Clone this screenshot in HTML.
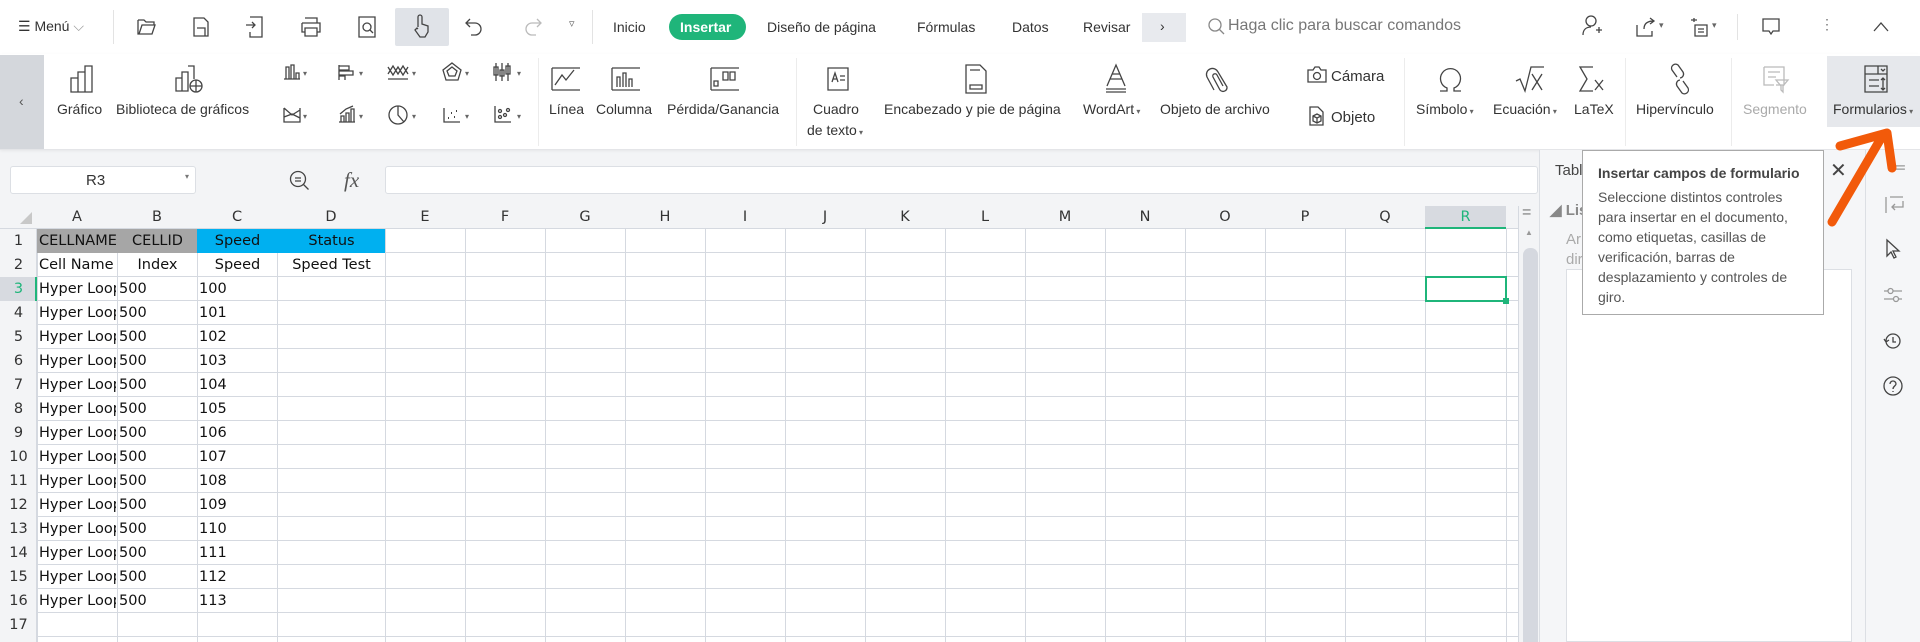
<!DOCTYPE html>
<html><head><meta charset="utf-8"><style>
*{box-sizing:border-box;margin:0;padding:0}
body{width:1920px;height:642px;overflow:hidden;background:#f3f4f6;font-family:"Liberation Sans",sans-serif;color:#333;position:relative}
.a{position:absolute}
.t{position:absolute;font-size:14px;color:#333;white-space:nowrap}
svg{position:absolute;overflow:visible}
svg *{fill:none;stroke:#444;stroke-width:1.3}
.g{position:absolute;background:#fff}
.cell{position:absolute;font-size:14.5px;font-family:"DejaVu Sans",sans-serif;color:#111;white-space:nowrap;overflow:hidden;height:24px;line-height:24px}
.dd{position:absolute;font-size:8px;color:#666;line-height:43px;top:52px}
</style></head><body>
<!-- top bar -->
<div class="a" style="left:0;top:0;width:1920px;height:54px;background:#fff"></div>
<div class="t" style="left:18px;top:18px;font-size:14px">☰ Menú <span style="color:#999">⌵</span></div>
<div class="a" style="left:113px;top:10px;width:1px;height:34px;background:#e3e3e3"></div>
<svg style="left:137px;top:18px" width="20" height="18"><path d="M1 2h6l2 2h8v3M1 2v14h14l3-9H5L2 16"/></svg>
<svg style="left:193px;top:17px" width="16" height="20"><path d="M1 1h10l4 4v14H1zM4 11h8v8"/></svg>
<svg style="left:245px;top:16px" width="18" height="22"><path d="M5 1h12v20H5v-5M1 9h9M7 6l3 3-3 3"/></svg>
<svg style="left:301px;top:17px" width="20" height="20"><path d="M4 1h12v5M1 6h18v9h-3M4 15H1V6M4 11h12v8H4z"/></svg>
<svg style="left:358px;top:16px" width="18" height="22"><path d="M1 1h16v20H1z"/><circle cx="9" cy="11" r="4"/><path d="M12 14l3 3"/></svg>
<div class="a" style="left:395px;top:8px;width:54px;height:38px;background:#e0e3e8;border-radius:2px"></div>
<svg style="left:413px;top:14px" width="18" height="24"><path d="M5 13V3a2 2 0 014 0v7l6 2v6l-3 5H7L2 16l2-2 1 1"/></svg>
<svg style="left:465px;top:18px" width="18" height="18"><path d="M5 1L1 5l4 4M1 5h9a6 6 0 010 12H6"/></svg>
<svg style="left:524px;top:18px" width="18" height="18"><path style="stroke:#bbb" d="M13 1l4 4-4 4M17 5H8a6 6 0 000 12h4"/></svg>
<div class="t" style="left:569px;top:17px;color:#666;font-size:11px">▿</div>
<div class="a" style="left:592px;top:10px;width:1px;height:34px;background:#e3e3e3"></div>
<div class="t" style="left:613px;top:19px">Inicio</div>
<div class="a" style="left:669px;top:14px;width:77px;height:26px;background:#1fb57a;border-radius:13px"></div>
<div class="t" style="left:680px;top:19px;color:#fff;font-weight:bold">Insertar</div>
<div class="t" style="left:767px;top:19px">Diseño de página</div>
<div class="t" style="left:917px;top:19px">Fórmulas</div>
<div class="t" style="left:1012px;top:19px">Datos</div>
<div class="t" style="left:1083px;top:19px">Revisar</div>
<div class="a" style="left:1142px;top:13px;width:44px;height:29px;background:#e8eaee"></div>
<div class="t" style="left:1160px;top:18px">›</div>
<svg style="left:1208px;top:18px" width="18" height="18"><circle cx="7" cy="7" r="6" style="stroke:#888"/><path d="M11 11l5 5" style="stroke:#888"/></svg>
<div class="t" style="left:1228px;top:17px;color:#777;font-size:16px">Haga clic para buscar comandos</div>
<svg style="left:1582px;top:15px" width="20" height="22"><circle cx="9" cy="6" r="5"/><path d="M1 20c0-6 4-8 8-8M14 15h6M17 12v6"/></svg>
<svg style="left:1636px;top:17px" width="20" height="20"><path d="M1 8v11h15v-5M8 12c0-6 4-8 10-8M14 1l4 3-4 3"/></svg>
<div class="t" style="left:1659px;top:20px;font-size:9px;color:#666">▾</div>
<svg style="left:1690px;top:17px" width="20" height="20"><path d="M4 1v4M1 3h6M5 8h12v11H5zM8 12h6M8 15h6"/></svg>
<div class="t" style="left:1712px;top:20px;font-size:9px;color:#666">▾</div>
<div class="a" style="left:1737px;top:14px;width:1px;height:26px;background:#e3e3e3"></div>
<svg style="left:1762px;top:18px" width="18" height="18"><path d="M1 1h16v12h-6l-2 3-2-3H1z"/></svg>
<div class="t" style="left:1820px;top:16px;color:#777">⋮</div>
<svg style="left:1873px;top:22px" width="16" height="10"><path d="M1 9l7-8 7 8"/></svg>
<!-- ribbon -->
<div class="a" style="left:0;top:54px;width:1920px;height:96px;background:#fff;border-bottom:1px solid #e4e5e8;box-shadow:0 1px 3px rgba(0,0,0,.06)"></div>
<div class="a" style="left:0;top:55px;width:44px;height:94px;background:#d4d7dc"></div>
<div class="t" style="left:19px;top:93px;color:#555">‹</div>
<svg style="left:70px;top:65px" width="24" height="28"><path d="M1 13h7v14H1zM8 7h7v20H8zM15 1h7v26h-7z"/></svg>
<div class="t" style="left:57px;top:101px">Gráfico</div>
<svg style="left:175px;top:65px" width="30" height="30"><path d="M1 13h6v13H1zM7 7h6v19H7zM13 1h6v13"/><circle cx="21" cy="21" r="6"/><path d="M15 21h12M21 15v12"/></svg>
<div class="t" style="left:116px;top:101px">Biblioteca de gráficos</div>
<svg style="left:283px;top:64px" width="18" height="16"><path d="M1 15h16M3 15V3h3v12M8 15V1h3v14M13 15V9h3v6"/></svg>
<svg style="left:338px;top:64px" width="18" height="16"><path d="M1 1v15M1 2h10v4H1M1 7h14v4H1M1 12h6v4"/></svg>
<svg style="left:387px;top:64px" width="22" height="16"><path d="M1 15h20M1 10l5-8 5 8 5-8 5 8M1 3l5 8 5-8 5 8 5-8"/></svg>
<svg style="left:442px;top:62px" width="20" height="20"><path d="M10 1l9 7-3 10H4L1 8zM10 5l5 4-2 5H7L5 9z"/></svg>
<svg style="left:493px;top:62px" width="22" height="20"><path d="M3 1v18M9 1v18M15 1v18M1 5h4v8H1zM7 8h4v6H7zM13 4h4v8h-4z"/></svg>
<svg style="left:283px;top:107px" width="18" height="16"><path d="M1 1v14h16V1M1 1l8 7 8-5M1 10l8-3 8 4"/></svg>
<svg style="left:338px;top:105px" width="18" height="18"><path d="M1 17h16M3 17v-6h3v6M8 17V8h3v9M13 17V4h3v13M2 9l6-5 7-3"/></svg>
<svg style="left:388px;top:105px" width="20" height="20"><circle cx="10" cy="10" r="9"/><path d="M10 1v9l6 7"/></svg>
<svg style="left:443px;top:107px" width="18" height="16"><path d="M1 1v14h16"/><path d="M5 11h1M8 6h1M11 10h1M13 4h1" style="stroke-width:2"/></svg>
<svg style="left:494px;top:105px" width="18" height="18"><path d="M1 1v16h16"/><circle cx="6" cy="12" r="1.5"/><circle cx="6" cy="6" r="1.5"/><circle cx="11" cy="10" r="1.5"/><circle cx="14" cy="5" r="1.5"/></svg>
<div class="dd" style="left:303px">▾<br>▾</div>
<div class="dd" style="left:359px">▾<br>▾</div>
<div class="dd" style="left:412px">▾<br>▾</div>
<div class="dd" style="left:465px">▾<br>▾</div>
<div class="dd" style="left:517px">▾<br>▾</div>
<div class="a" style="left:538px;top:58px;width:1px;height:88px;background:#ececec"></div>
<svg style="left:551px;top:67px" width="30" height="24"><path d="M1 1h28M1 23h28M1 1v22M4 18l7-10 4 5 8-10"/></svg>
<div class="t" style="left:549px;top:101px">Línea</div>
<svg style="left:611px;top:67px" width="30" height="24"><path d="M1 1h28M1 23h28M1 1v22M6 20V10h3v10M12 20V6h3v14M18 20v-8h3v8"/></svg>
<div class="t" style="left:596px;top:101px">Columna</div>
<svg style="left:710px;top:67px" width="30" height="24"><path d="M1 1v22M1 23h28M1 1h28M4 14h4v5H4zM13 5h5v8h-5zM20 5h5v8h-5z"/></svg>
<div class="t" style="left:667px;top:101px">Pérdida/Ganancia</div>
<div class="a" style="left:796px;top:58px;width:1px;height:88px;background:#ececec"></div>
<svg style="left:826px;top:66px" width="24" height="26"><path d="M2 2h20v22H2zM6 16l3-9 3 9M7 13h4M14 10h5M14 14h5"/></svg>
<div class="t" style="left:813px;top:101px">Cuadro</div>
<div class="t" style="left:807px;top:122px">de texto<span style="font-size:8px;color:#666"> ▾</span></div>
<svg style="left:965px;top:64px" width="22" height="30"><path d="M1 1h14l6 6v22H1zM5 6h10M5 21h12v4H5z"/></svg>
<div class="t" style="left:884px;top:101px">Encabezado y pie de página</div>
<svg style="left:1104px;top:64px" width="24" height="30"><path d="M3 22L12 1l9 21M6 15h12M8 10h8M2 25h20M2 28h20"/></svg>
<div class="t" style="left:1083px;top:101px">WordArt<span style="font-size:8px;color:#666"> ▾</span></div>
<svg style="left:1205px;top:64px" width="28" height="30"><path d="M9 26L2 13a6 6 0 0111-5l9 15a4 4 0 01-7 3L8 13a2 2 0 014-2l6 11"/></svg>
<div class="t" style="left:1160px;top:101px">Objeto de archivo</div>
<svg style="left:1307px;top:66px" width="20" height="17"><path d="M1 4h5l2-3h4l2 3h5v12H1z"/><circle cx="10" cy="10" r="3.5"/></svg>
<div class="t" style="left:1331px;top:68px;font-size:15px">Cámara</div>
<svg style="left:1307px;top:106px" width="18" height="20"><path d="M3 1h8l5 5v13H3zM6 10l4-2 4 2v5l-4 2-4-2zM6 10l4 2 4-2M10 12v5"/></svg>
<div class="t" style="left:1331px;top:109px;font-size:15px">Objeto</div>
<div class="a" style="left:1404px;top:58px;width:1px;height:88px;background:#ececec"></div>
<svg style="left:1436px;top:66px" width="28" height="26"><path d="M4 25h7v-3a10 10 0 117 0v3h7"/></svg>
<div class="t" style="left:1416px;top:101px">Símbolo<span style="font-size:8px;color:#666"> ▾</span></div>
<svg style="left:1515px;top:66px" width="30" height="26"><path d="M1 15l4-2 5 12 6-24h13M17 8l10 16M27 8L17 24"/></svg>
<div class="t" style="left:1493px;top:101px">Ecuación<span style="font-size:8px;color:#666"> ▾</span></div>
<svg style="left:1579px;top:66px" width="26" height="26"><path d="M14 1H1l7 12-7 12h13M16 14l8 10M24 14l-8 10"/></svg>
<div class="t" style="left:1574px;top:101px">LaTeX</div>
<div class="a" style="left:1625px;top:58px;width:1px;height:88px;background:#ececec"></div>
<svg style="left:1668px;top:64px" width="24" height="30"><path d="M9 13L4 6a4 4 0 016-5l5 7a4 4 0 01-3 6M15 17l5 7a4 4 0 01-6 5l-5-7a4 4 0 013-6"/></svg>
<div class="t" style="left:1636px;top:101px">Hipervínculo</div>
<div class="a" style="left:1731px;top:58px;width:1px;height:88px;background:#ececec"></div>
<svg style="left:1763px;top:66px" width="26" height="28"><path style="stroke:#bbb" d="M1 1h20v18H13M1 1v18h10M5 6h12M5 11h8M13 14h12l-5 6v6l-2-2v-4z"/></svg>
<div class="t" style="left:1743px;top:101px;color:#aaa">Segmento</div>
<div class="a" style="left:1827px;top:56px;width:93px;height:71px;background:#e6e8ec"></div>
<svg style="left:1864px;top:65px" width="24" height="28"><path d="M1 1h22v26H1zM1 9h22M14 1v8M17 4l2 2 2-2M5 15h10M5 21h10M19 13v12M17 15l2-2 2 2M17 23l2 2 2-2"/></svg>
<div class="t" style="left:1833px;top:101px">Formularios<span style="font-size:8px;color:#666"> ▾</span></div>
<!-- formula bar -->
<div class="a" style="left:10px;top:166px;width:186px;height:28px;background:#fff;border:1px solid #dcdfe4;border-radius:3px"></div>
<div class="t" style="left:86px;top:172px;font-size:15px">R3</div>
<div class="t" style="left:185px;top:172px;font-size:8px;color:#777">▾</div>
<svg style="left:289px;top:170px" width="22" height="22"><circle cx="9" cy="9" r="7.5"/><path d="M6 8h6M6 11h6M14.5 14.5l5 5"/></svg>
<div class="t" style="left:344px;top:168px;font-size:21px;font-style:italic;font-family:'Liberation Serif',serif;color:#555">fx</div>
<div class="a" style="left:385px;top:166px;width:1153px;height:28px;background:#fff;border:1px solid #dcdfe4;border-radius:3px"></div>
<!-- grid -->
<div class="g" style="left:0;top:206px;width:1518px;height:436px"></div>
<svg style="left:0;top:0" width="1518" height="642" id="grid"></svg>
<div class="a" style="left:0;top:206px;width:1518px;height:23px;background:#f3f4f6;border-bottom:1px solid #d5d9e0"></div>
<div class="a" style="left:0;top:229px;width:37px;height:413px;background:#f3f4f6;border-right:1px solid #d5d9e0"></div>
<div class="a" style="left:1425px;top:206px;width:81px;height:23px;background:#d7dae0;border-bottom:2px solid #1fb57a"></div>
<div class="a" style="left:0;top:277px;width:37px;height:24px;background:#d7dae0;border-right:2px solid #1fb57a"></div>
<div class="a" style="left:37px;top:229px;width:160px;height:24px;background:#a6a6a6"></div>
<div class="a" style="left:197px;top:229px;width:188px;height:24px;background:#00b0f0"></div>
<div id="cells"></div>
<div class="a" style="left:1425px;top:276px;width:82px;height:26px;border:2px solid #1fb57a"></div>
<div class="a" style="left:1503px;top:298px;width:6px;height:6px;background:#1fb57a"></div>
<svg style="left:19px;top:211px" width="14" height="14"><path d="M13 1v12H1z" style="fill:#c8c8c8;stroke:none"/></svg>
<!-- scroll -->
<div class="a" style="left:1518px;top:206px;width:21px;height:436px;background:#f3f4f6;border-left:1px solid #d5d9e0"></div>
<div class="t" style="left:1522px;top:204px;color:#777;font-size:16px">=</div>
<div class="t" style="left:1525px;top:228px;color:#999;font-size:8px">▲</div>
<div class="a" style="left:1523px;top:248px;width:15px;height:394px;background:#d5d8df;border-radius:7px 7px 0 0"></div>
<!-- panel -->
<div class="a" style="left:1539px;top:150px;width:327px;height:492px;background:#f5f6f8;border-left:1px solid #dcdfe4"></div>
<div class="t" style="left:1555px;top:162px;font-size:15px;color:#444">Tabl</div>
<div class="t" style="left:1830px;top:158px;font-size:20px;color:#444">✕</div>
<div class="t" style="left:1550px;top:201px;font-size:15px;color:#888;font-weight:bold">◢ Lis</div>
<div class="t" style="left:1566px;top:231px;font-size:15px;color:#aaa">Ar</div>
<div class="t" style="left:1566px;top:251px;font-size:15px;color:#aaa">dir</div>
<div class="a" style="left:1566px;top:269px;width:286px;height:373px;background:#fff;border:1px solid #dcdfe4"></div>
<div class="a" style="left:1865px;top:150px;width:55px;height:492px;background:#f5f6f8;border-left:1px solid #dcdfe4"></div>
<div class="t" style="left:1892px;top:157px;color:#999;font-size:18px">═</div>
<svg style="left:1884px;top:196px" width="20" height="18"><path style="stroke:#999" d="M2 1v16M6 1h13M19 5v6H8M11 8l-3 3 3 3"/></svg>
<svg style="left:1886px;top:239px" width="16" height="20"><path d="M1 1v16l4-4 3 6 2-1-3-6h6z"/></svg>
<svg style="left:1883px;top:288px" width="20" height="14"><path style="stroke:#999" d="M1 3h4M10 3h9M1 11h10M15 11h4"/><circle cx="7.5" cy="3" r="2.5" style="stroke:#999"/><circle cx="13" cy="11" r="2.5" style="stroke:#999"/></svg>
<svg style="left:1883px;top:331px" width="20" height="20"><path d="M3 10a7 7 0 107-7 7 7 0 00-7 7M1 8l2 3 3-2M10 6v5h3"/></svg>
<svg style="left:1883px;top:376px" width="20" height="20"><circle cx="10" cy="10" r="9"/><path d="M7 8a3 3 0 116 0c0 2-3 2-3 5M10 15v1"/></svg>
<!-- tooltip -->
<div class="a" style="left:1582px;top:150px;width:242px;height:165px;background:#fff;border:1px solid #aaa;padding:12px 0 0 15px;font-size:14px;color:#555;line-height:20px">
<div style="font-weight:bold;color:#444;margin-bottom:4px">Insertar campos de formulario</div>
<div>Seleccione distintos controles<br>para insertar en el documento,<br>como etiquetas, casillas de<br>verificación, barras de<br>desplazamiento y controles de<br>giro.</div></div>
<!-- arrow -->
<svg style="left:0;top:0" width="1920" height="642"><path d="M1832 222L1880 140M1840 146L1887 133L1892 168" style="stroke:#f25a0a;stroke-width:9;stroke-linecap:round;stroke-linejoin:round"/></svg>
<script>
var cols=[0,37,117,197,277,385,465,545,625,705,785,865,945,1025,1105,1185,1265,1345,1425,1506];
var L="ABCDEFGHIJKLMNOPQR";
var s='',c='';
for(var i=1;i<cols.length;i++){s+='<path d="M'+(cols[i]+.5)+' 206V642" style="stroke:#d5d9e0;stroke-width:1"/>';}
for(var r=0;r<=17;r++){var y=229+r*24-.5;s+='<path d="M0 '+y+'H1518" style="stroke:#d5d9e0;stroke-width:1"/>';}
document.getElementById('grid').innerHTML=s;
for(var i=0;i<18;i++){var w=cols[i+2]-cols[i+1];c+='<div class="cell" style="left:'+cols[i+1]+'px;top:206px;width:'+w+'px;text-align:center;height:23px;line-height:23px;color:'+(i==17?'#1fb57a':'#333')+'">'+L[i]+'</div>';}
for(var r=1;r<=17;r++){c+='<div class="cell" style="left:0;top:'+(229+(r-1)*24)+'px;width:37px;text-align:center;color:'+(r==3?'#1fb57a':'#333')+'">'+r+'</div>';}
function cell(col,row,t,al){var x=cols[col],w=cols[col+1]-x;c+='<div class="cell" style="left:'+(x+2)+'px;top:'+(229+(row-1)*24)+'px;width:'+(w-3)+'px;text-align:'+(al||'left')+'">'+t+'</div>';}
cell(1,1,'CELLNAME','left');cell(2,1,'CELLID','center');cell(3,1,'Speed','center');cell(4,1,'Status','center');
cell(1,2,'Cell Name');cell(2,2,'Index','center');cell(3,2,'Speed','center');cell(4,2,'Speed Test','center');
for(var r=3;r<=16;r++){cell(1,r,'Hyper Loop');cell(2,r,'500');cell(3,r,''+(97+r));}
document.getElementById('cells').innerHTML=c;
</script>
</body></html>
